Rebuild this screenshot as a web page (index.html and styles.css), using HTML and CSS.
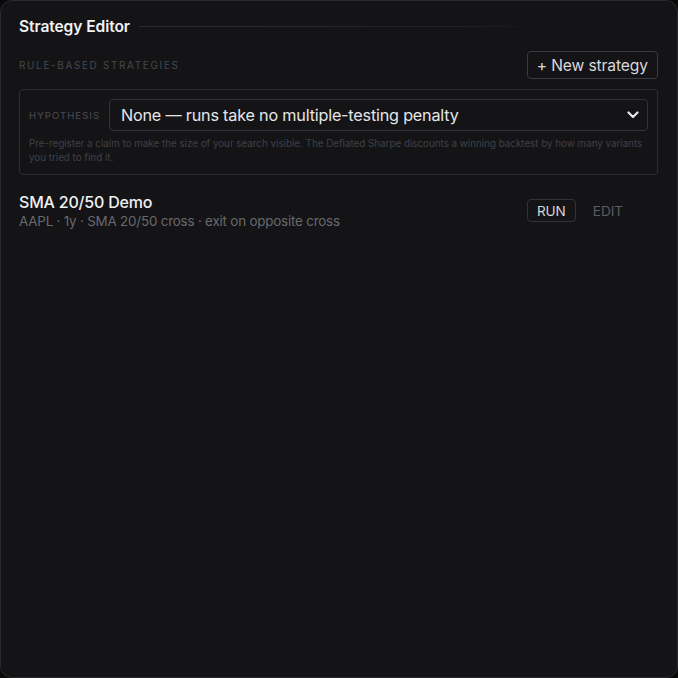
FILE: index.html
```html
<!DOCTYPE html>
<html lang="en">
<head>
<meta charset="utf-8">
<title>Strategy Editor</title>
<link rel="stylesheet" href="styles.css">
</head>
<body>
<div class="panel">
  <div class="title-row">
    <h1 class="title">Strategy Editor</h1>
    <div class="title-line"></div>
  </div>
  <div class="section-head">
    <span class="section-label">RULE-BASED STRATEGIES</span>
    <button class="btn-new">+ New strategy</button>
  </div>
  <div class="hyp-box">
    <div class="hyp-row">
      <span class="hyp-label">HYPOTHESIS</span>
      <div class="select">
        <span class="select-text">None — runs take no multiple-testing penalty</span>
        <svg class="chev" width="12" height="8" viewBox="0 0 12 8"><path d="M1.5 1.5 L6 6 L10.5 1.5" fill="none" stroke="#e8e8ea" stroke-width="2.2" stroke-linecap="round" stroke-linejoin="round"/></svg>
      </div>
    </div>
    <p class="hyp-help">Pre-register a claim to make the size of your search visible. The Deflated Sharpe discounts a winning backtest by how many variants you tried to find it.</p>
  </div>
  <div class="strat-row">
    <div class="strat-info">
      <div class="strat-name">SMA 20/50 Demo</div>
      <div class="strat-meta">AAPL · 1y · SMA 20/50 cross · exit on opposite cross</div>
    </div>
    <div class="strat-actions">
      <button class="btn-run">RUN</button>
      <button class="btn-edit">EDIT</button>
    </div>
  </div>
</div>
</body>
</html>
```
FILE: styles.css
```css
* { box-sizing: border-box; }
html, body {
  margin: 0;
  padding: 0;
  background: #0a0a0b;
  font-family: "Inter", "Noto Sans", sans-serif;
}
.panel {
  width: 678px;
  height: 678px;
  background: #141416;
  border: 1px solid #2a2a2e;
  border-radius: 12px;
  padding: 13px 19px 0 18px;
}
.title-row {
  display: flex;
  align-items: center;
  gap: 9px;
  height: 24px;
}
.title {
  margin: 0;
  font-size: 15.6px;
  font-weight: 600;
  color: #f2f2f4;
  letter-spacing: -0.1px;
}
.title-line {
  width: 400px;
  height: 1px;
  background: linear-gradient(to right, #2a2a2e, #232326 80%, rgba(35,35,38,0));
}
.section-head {
  display: flex;
  justify-content: space-between;
  align-items: center;
  margin-top: 13px;
}
.section-label {
  font-size: 9.8px;
  letter-spacing: 1.75px;
  color: #48484e;
}
.btn-new {
  font-family: inherit;
  background: transparent;
  border: 1px solid #3a3a3f;
  border-radius: 4px;
  color: #d8d8dc;
  font-size: 15.6px;
  height: 28px;
  padding: 0 9px;
  letter-spacing: -0.1px;
}
.hyp-box {
  margin-top: 10px;
  border: 1px solid #2e2e32;
  border-radius: 4px;
  padding: 9px 9px 9px 9px;
}
.hyp-row {
  display: flex;
  align-items: center;
  gap: 9px;
}
.hyp-label {
  font-size: 9.5px;
  letter-spacing: 1.1px;
  color: #4c4c52;
  width: 71px;
}
.select {
  flex: 1;
  height: 32px;
  border: 1px solid #333337;
  border-radius: 4px;
  display: flex;
  align-items: center;
  justify-content: space-between;
  padding: 0 8px 0 11px;
}
.select-text {
  font-size: 16.2px;
  color: #e6e6e8;
  letter-spacing: -0.2px;
}
.hyp-help {
  margin: 6px 0 0 0;
  font-size: 9.8px;
  line-height: 14px;
  color: #404046;
}
.strat-row {
  display: flex;
  justify-content: space-between;
  align-items: center;
  margin-top: 17px;
}
.strat-name {
  font-size: 16px;
  font-weight: 500;
  color: #f0f0f2;
  line-height: 20px;
  letter-spacing: -0.2px;
}
.strat-meta {
  font-size: 13.4px;
  color: #68686e;
  line-height: 19px;
  letter-spacing: -0.2px;
}
.strat-actions {
  display: flex;
  align-items: center;
  gap: 7px;
  margin-right: 25px;
  margin-bottom: 2px;
}
.btn-run, .btn-edit {
  font-family: inherit;
  background: transparent;
  font-size: 13.5px;
  height: 23px;
  padding: 0 9px;
  border-radius: 4px;
}
.btn-run {
  border: 1px solid #333337;
  color: #d6d6da;
}
.btn-edit {
  border: 1px solid transparent;
  color: #5c5c62;
}
```
